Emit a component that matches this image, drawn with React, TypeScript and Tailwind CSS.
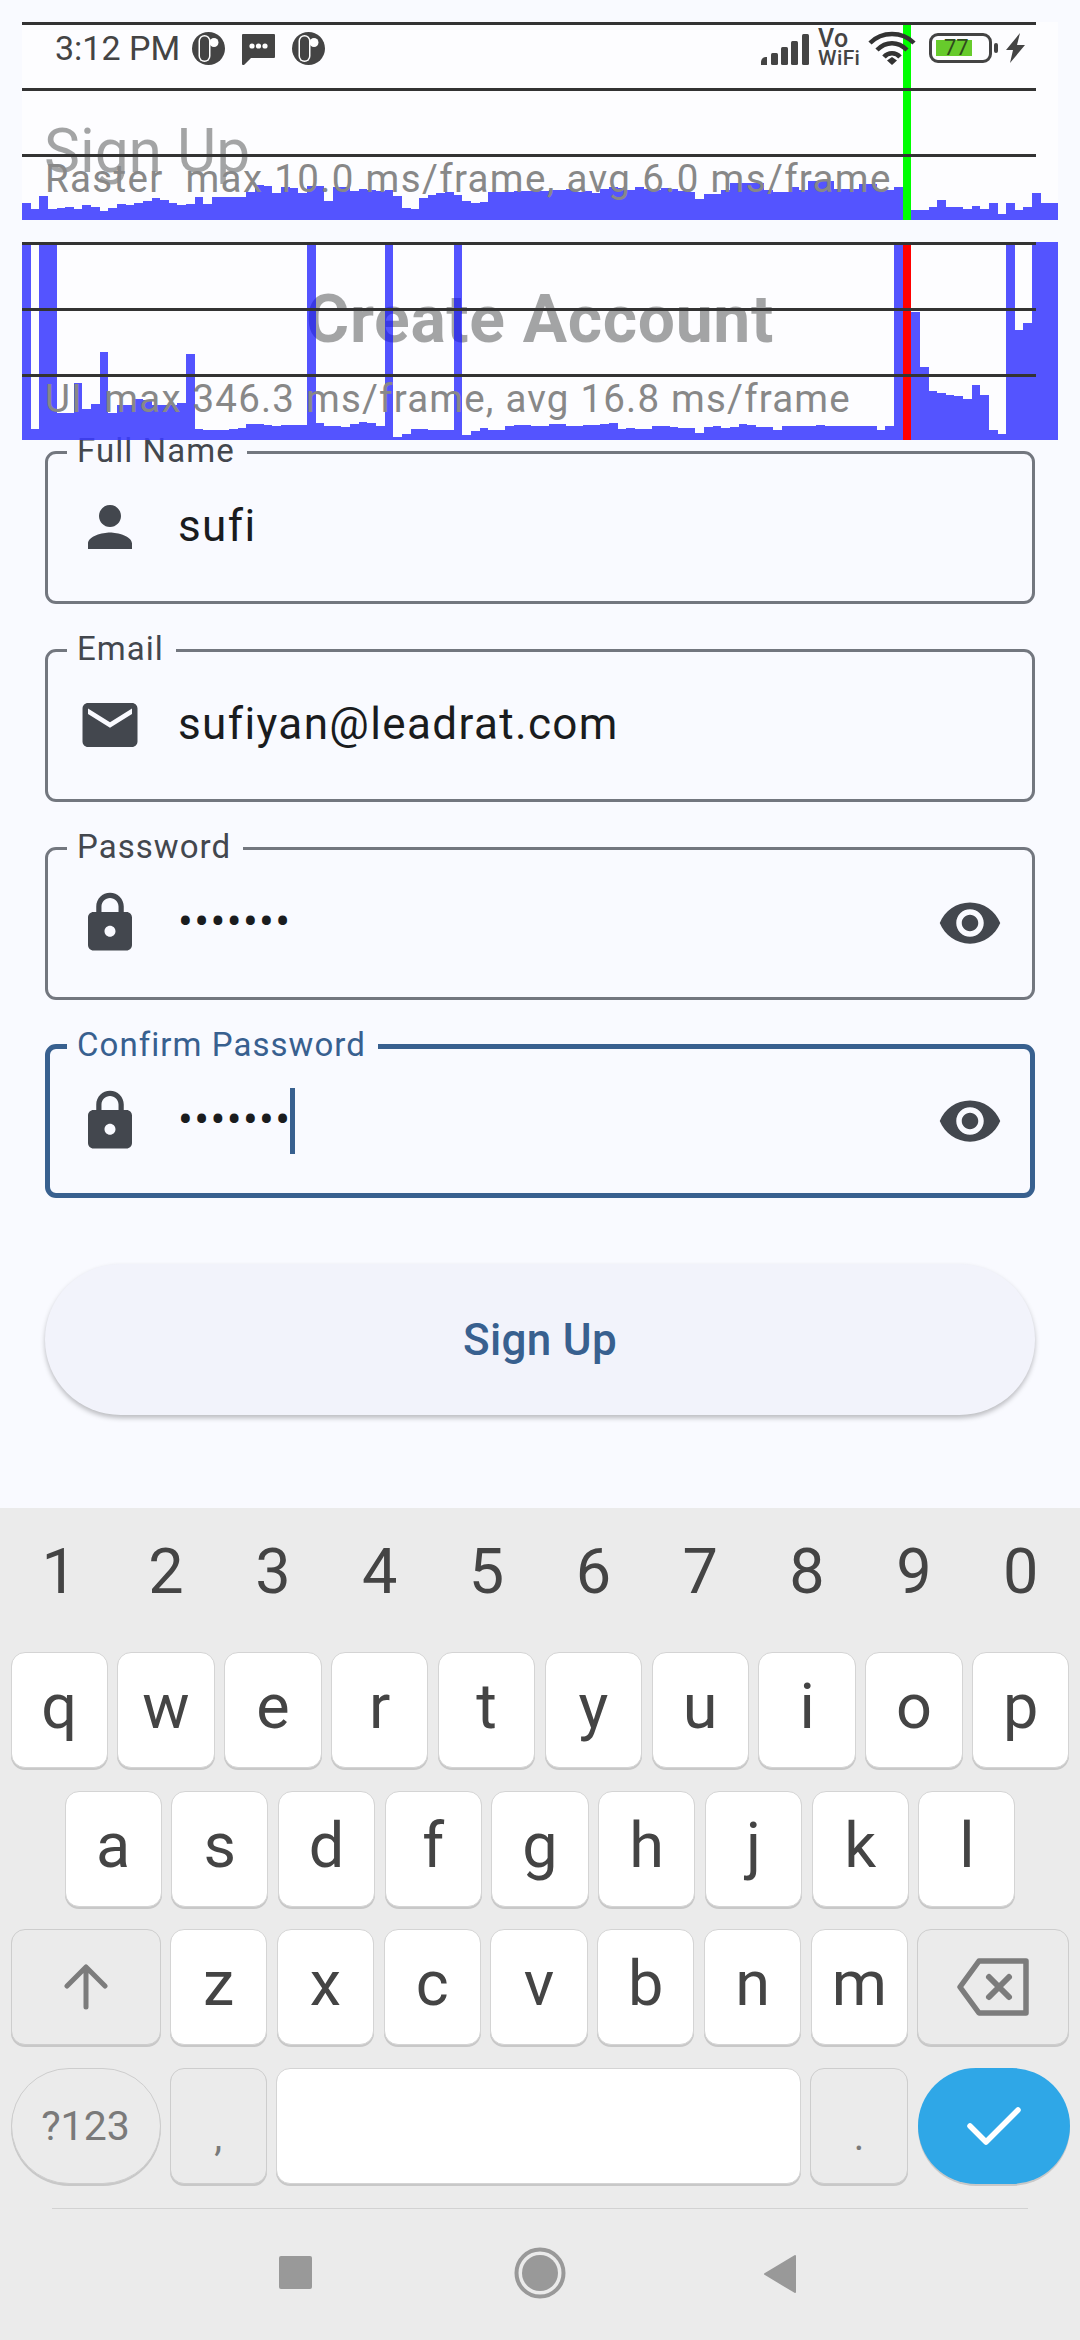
import React from "react";

const raster = [17,11,24,11,12,13,11,15,13,9,12,16,15,17,19,22,20,17,15,16,23,16,23,23,23,23,28,35,34,27,33,32,27,34,34,19,33,33,29,31,30,29,30,24,12,11,22,25,27,28,25,19,17,18,28,28,28,29,29,29,29,30,30,31,28,29,27,31,33,32,30,33,31,30,32,31,29,28,21,26,26,30,37,37,37,37,30,28,28,33,30,39,39,39,31,31,31,36,36,30,30,33,0,10,10,13,20,13,13,11,14,11,17,6,17,10,13,27,17,17];
const ui = [198,11,198,198,27,27,57,31,36,88,27,35,35,41,40,35,35,35,37,86,11,10,10,10,11,12,16,16,15,14,15,15,15,198,17,14,14,13,16,18,17,14,198,3,6,11,11,10,10,10,198,5,9,12,10,10,14,15,15,14,14,16,16,14,14,15,15,16,17,11,12,11,11,14,14,13,12,12,7,13,14,12,13,16,15,13,13,10,14,14,14,14,15,14,14,14,14,14,14,10,14,198,0,128,73,49,47,45,44,41,55,45,10,6,198,110,117,198,198,198];

function Graph({ data, marker }: { data: number[]; marker: string }) {
  const w = 1036 / 120;
  return (
    <svg className="absolute left-0 top-0" width="1036" height="198" viewBox="0 0 1036 198" shapeRendering="crispEdges">
      {data.map((h, i) => (
        <rect key={i} x={i * w} y={198 - h} width={w} height={h} fill="#0c0cff" fillOpacity="0.7" />
      ))}
      <rect x={102 * w} y="0" width={w} height="198" fill={marker} />
    </svg>
  );
}

function PerfPanel({ data, marker, label, top, spacing }: { data: number[]; marker: string; label: string; top: string; spacing: string }) {
  return (
    <div className={`absolute left-[22px] w-[1036px] h-[198px] bg-white/60 ${top}`}>
      <Graph data={data} marker={marker} />
      <div className="absolute left-0 top-0 w-[1014px] h-[3px] bg-[#333333]" />
      <div className="absolute left-0 top-[66px] w-[1014px] h-[3px] bg-[#333333]" />
      <div className="absolute left-0 top-[132px] w-[1014px] h-[3px] bg-[#333333]" />
      <div className={`absolute left-[23px] top-[134px] text-[38.5px] leading-[46px] text-[#888888] whitespace-pre ${spacing}`}>{label}</div>
    </div>
  );
}

const PERSON = "M12 12c2.21 0 4-1.79 4-4s-1.79-4-4-4-4 1.79-4 4 1.79 4 4 4zm0 2c-2.67 0-8 1.34-8 4v2h16v-2c0-2.66-5.33-4-8-4z";
const MAIL = "M20 4H4c-1.1 0-1.99.9-1.99 2L2 18c0 1.1.9 2 2 2h16c1.1 0 2-.9 2-2V6c0-1.1-.9-2-2-2zm0 4l-8 5-8-5V6l8 5 8-5v2z";
const LOCK = "M18 8h-1V6c0-2.76-2.24-5-5-5S7 3.24 7 6v2H6c-1.1 0-2 .9-2 2v10c0 1.1.9 2 2 2h12c1.1 0 2-.9 2-2V10c0-1.1-.9-2-2-2zm-6 9c-1.1 0-2-.9-2-2s.9-2 2-2 2 .9 2 2-.9 2-2 2zm3.1-9H8.9V6c0-1.71 1.39-3.1 3.1-3.1 1.71 0 3.1 1.39 3.1 3.1v2z";
const EYE = "M12 4.5C7 4.5 2.73 7.61 1 12c1.73 4.39 6 7.5 11 7.5s9.27-3.11 11-7.5c-1.73-4.39-6-7.5-11-7.5zM12 17c-2.76 0-5-2.24-5-5s2.24-5 5-5 5 2.24 5 5-2.24 5-5 5zm0-8c-1.66 0-3 1.34-3 3s1.34 3 3 3 3-1.34 3-3-1.34-3-3-3z";

function MIcon({ d }: { d: string }) {
  return (
    <svg width="66" height="66" viewBox="0 0 24 24" className="shrink-0" fill="#43474e">
      <path d={d} />
    </svg>
  );
}

function Field({
  label,
  icon,
  value,
  secret,
  focused,
}: {
  label: string;
  icon: string;
  value: string;
  secret?: boolean;
  focused?: boolean;
}) {
  return (
    <fieldset className={`h-[171px] rounded-[11px] ${focused ? "border-[5px] border-[#38608f]" : "border-[3px] border-[#73777f]"}`}>
      <legend className={`pl-[10px] pr-[12px] text-[33px] leading-[38px] tracking-[1.05px] ${focused ? "ml-[17px] text-[#38608f]" : "ml-[19px] text-[#43474e]"}`}>
        <span className="relative -top-[1px]">{label}</span>
      </legend>
      <div className={`flex h-[112px] items-center ${focused ? "pl-[27px] pr-[27px]" : "pl-[29px] pr-[29px]"}`}>
        <MIcon d={icon} />
        <div className="ml-[35px] flex flex-1 items-center pb-[3px] text-[44px] leading-[52px] tracking-[1.375px] text-[#1a1c1e]">
          <span>{value}</span>
          {focused && <span className="-ml-[2px] mt-[3px] h-[66px] w-[5px] bg-[#38608f]" />}
        </div>
        {secret && <MIcon d={EYE} />}
      </div>
    </fieldset>
  );
}

function Key({ label, cls = "flex-1" }: { label: string; cls?: string }) {
  return (
    <div className={`${cls} h-[116px] flex items-center justify-center rounded-[14px] bg-white border border-[#d4d4d4] pb-[5px] shadow-[0_2px_0_#c8c8c8] text-[63px] text-[#444444]`}>
      {label}
    </div>
  );
}

function FnKey({ children, cls, round }: { children: React.ReactNode; cls: string; round?: boolean }) {
  return (
    <div className={`${cls} h-[116px] flex items-center justify-center ${round ? "rounded-[58px]" : "rounded-[14px]"} bg-[#ebebeb] border border-[#cdcdcd] shadow-[0_2px_0_#c8c8c8] text-[#7a7a7a]`}>
      {children}
    </div>
  );
}

function StatusLogo() {
  return (
    <svg width="33" height="33" viewBox="0 0 33 33" className="shrink-0">
      <circle cx="16.5" cy="16.5" r="16.5" fill="#444444" />
      <rect x="6.5" y="3" width="12" height="27" rx="6" fill="#ffffff" />
      <rect x="8" y="4.5" width="9" height="24" rx="4.5" fill="#444444" />
      <circle cx="22" cy="10.5" r="4.5" fill="#ffffff" />
    </svg>
  );
}

function StatusBar() {
  return (
    <div className="relative z-20 flex h-[52px] items-center pl-[55px] pr-[55px]">
      <span className="mr-[12px] text-[34px] leading-[40px] text-[#444444]">3:12 PM</span>
      <StatusLogo />
      <svg width="33" height="31" viewBox="0 0 33 31" className="ml-[17px] mt-[3px]">
        <path d="M1 0h31a1 1 0 0 1 1 1v22a1 1 0 0 1-1 1H9l-7 7H1a1 1 0 0 1-1-1V1a1 1 0 0 1 1-1z" fill="#444444" />
        <circle cx="10" cy="12" r="2.6" fill="#fff" />
        <circle cx="16.5" cy="12" r="2.6" fill="#fff" />
        <circle cx="23" cy="12" r="2.6" fill="#fff" />
      </svg>
      <div className="ml-[17px]"><StatusLogo /></div>
      <div className="flex-1" />
      <svg width="48" height="31" viewBox="0 0 48 31" className="mt-[2px]">
        <path d="M0 31v-3a5 5 0 0 1 6-5v8z" fill="#444444" />
        <rect x="10" y="19" width="7" height="12" rx="1.5" fill="#444444" />
        <rect x="20" y="13" width="7" height="18" rx="1.5" fill="#444444" />
        <rect x="30" y="7" width="7" height="24" rx="1.5" fill="#444444" />
        <rect x="41" y="0" width="7" height="31" rx="1.5" fill="#444444" />
      </svg>
      <div className="ml-[9px] flex w-[42px] flex-col items-start font-medium text-[#444444]">
        <span className="text-[25px] leading-[20px] tracking-[0.5px]">Vo</span>
        <span className="text-[21px] leading-[18px] tracking-[0.4px]">WiFi</span>
      </div>
      <svg width="48" height="36" viewBox="0 0 48 36" className="ml-[8px]" fill="none" stroke="#333333" strokeWidth="4.5">
        <path d="M2 13C14 1 34 1 46 13" />
        <path d="M9 20C18 11 30 11 39 20" />
        <path d="M16 27C20 22 28 22 32 27" />
        <path d="M19 30.5l5-3.5 5 3.5-5 4.5z" fill="#333333" stroke="none" />
      </svg>
      <div className="relative ml-[13px] flex h-[30px] w-[63px] items-center rounded-[9px] border-[3px] border-[#444444]">
        <div className="absolute left-[4px] top-[4px] h-[16px] w-[36px] bg-[#67cb2c]" />
        <span className="relative ml-[12px] text-[22px] leading-[22px] text-[#2f4a1e]">77</span>
      </div>
      <div className="ml-[2px] h-[10px] w-[4px] rounded-[2px] bg-[#444444]" />
      <svg width="19" height="30" viewBox="0 0 19 30" className="ml-[8px]">
        <path d="M14 0L0 17h7l-3 13L19 12h-8z" fill="#444444" />
      </svg>
    </div>
  );
}

function Keyboard() {
  const digits = ["1", "2", "3", "4", "5", "6", "7", "8", "9", "0"];
  return (
    <div className="mt-auto flex h-[832px] flex-col bg-[#ebebeb] pt-[5px]">
      <div className="flex h-[118px] gap-[9.5px] px-[10.5px]">
        {digits.map((d) => (
          <div key={d} className="flex flex-1 items-center justify-center text-[63px] text-[#444444]">{d}</div>
        ))}
      </div>
      <div className="mt-[21px] flex gap-[9.5px] px-[10.5px]">
        {"qwertyuiop".split("").map((k) => <Key key={k} label={k} />)}
      </div>
      <div className="mt-[23px] flex gap-[9.5px] px-[64.5px]">
        {"asdfghjkl".split("").map((k) => <Key key={k} label={k} />)}
      </div>
      <div className="mt-[22px] flex gap-[9.5px] px-[10.5px]">
        <FnKey cls="w-[150px]">
          <svg width="44" height="46" viewBox="0 0 44 46" fill="none" stroke="#7c7c7c" strokeWidth="5" strokeLinecap="round" strokeLinejoin="round">
            <path d="M22 43V3M3 22L22 3l19 19" />
          </svg>
        </FnKey>
        {"zxcvbnm".split("").map((k) => <Key key={k} label={k} />)}
        <FnKey cls="w-[152px]">
          <svg width="72" height="58" viewBox="0 0 72 58" fill="none" stroke="#7c7c7c" strokeWidth="5.5" strokeLinecap="round" strokeLinejoin="round">
            <path d="M22 3h47v52H22L3 29z" />
            <path d="M32 19l20 20M52 19L32 39" strokeWidth="6" />
          </svg>
        </FnKey>
      </div>
      <div className="mt-[23px] flex gap-[9.5px] px-[10.5px]">
        <FnKey cls="w-[150px]" round><span className="pt-[2px] text-[41px]">?123</span></FnKey>
        <FnKey cls="w-[96.5px]"><span className="pt-[22px] text-[40px]">,</span></FnKey>
        <Key label="" />
        <FnKey cls="w-[98px]"><span className="pt-[22px] text-[40px]">.</span></FnKey>
        <div className="flex h-[116px] w-[152px] items-center justify-center rounded-[58px] bg-[#2fa7e7] shadow-[0_2px_0_#c8c8c8]">
          <svg width="54" height="40" viewBox="0 0 54 40" fill="none" stroke="#ffffff" strokeWidth="5.5" strokeLinecap="round" strokeLinejoin="round">
            <path d="M3 20l16 16L51 4" />
          </svg>
        </div>
      </div>
      <div className="mx-[52px] mt-[24px] h-px bg-[#d2d2d2]" />
      <div className="relative flex h-[129px] items-start">
        <div className="absolute left-[279px] top-[47px] h-[33px] w-[33px] rounded-[2px] bg-[#999999]" />
        <svg width="52" height="52" viewBox="0 0 52 52" className="absolute left-[514px] top-[38px]">
          <circle cx="26" cy="26" r="23.5" fill="none" stroke="#999999" strokeWidth="4" />
          <circle cx="26" cy="26" r="18" fill="#999999" />
        </svg>
        <svg width="33" height="38" viewBox="0 0 33 38" className="absolute left-[764px] top-[46px]">
          <path d="M31 1L1 19l30 18z" fill="#999999" stroke="#999999" strokeWidth="2" strokeLinejoin="round" />
        </svg>
      </div>
    </div>
  );
}

export default function App() {
  return (
    <div className="relative flex h-[2340px] w-[1080px] flex-col overflow-hidden bg-[#f9faff] pt-[22px] font-[Roboto,sans-serif]">
      <StatusBar />
      <h2 className="mt-[43px] pl-[44px] text-[60.5px] leading-[70px] font-normal text-[#1a1c1e]">Sign Up</h2>
      <h1 className="mt-[95px] text-center text-[66px] leading-[76px] font-bold tracking-[0.65px] text-[#1a1c1e]">Create Account</h1>
      <form className="mx-[45px] mt-[75px] flex flex-col gap-[27px]">
        <Field label="Full Name" icon={PERSON} value="sufi" />
        <Field label="Email" icon={MAIL} value="sufiyan@leadrat.com" />
        <Field label="Password" icon={LOCK} value="•••••••" secret />
        <Field label="Confirm Password" icon={LOCK} value="•••••••" secret focused />
        <div className="mt-[39px] flex h-[151px] items-center justify-center rounded-full bg-[#f2f3fb] text-[44px] font-medium tracking-[0.3px] text-[#38608f] shadow-[0_3px_5px_rgba(0,0,0,0.25)]">
          Sign Up
        </div>
      </form>
      <Keyboard />
      <PerfPanel data={raster} marker="#00ff00" top="top-[22px]" spacing="tracking-[1.35px]" label="Raster  max 10.0 ms/frame, avg 6.0 ms/frame" />
      <PerfPanel data={ui} marker="#ff0000" top="top-[242px]" spacing="tracking-[1.2px]" label="UI  max 346.3 ms/frame, avg 16.8 ms/frame" />
    </div>
  );
}
